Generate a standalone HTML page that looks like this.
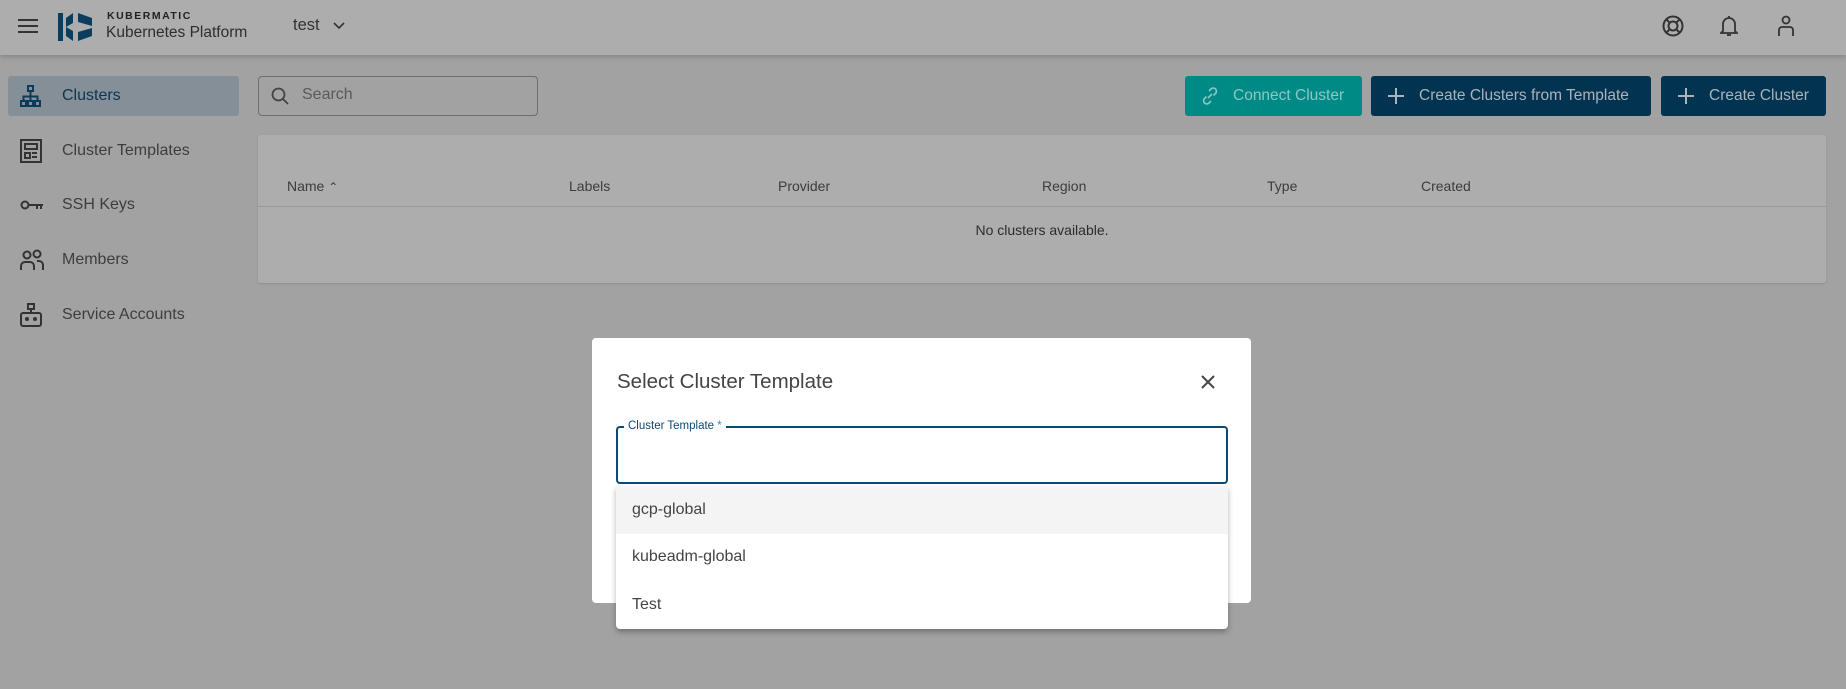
<!DOCTYPE html>
<html><head><meta charset="utf-8"><style>
*{box-sizing:border-box;margin:0;padding:0}
body{width:1846px;height:689px;overflow:hidden;background:#a2a2a2;font-family:"Liberation Sans",sans-serif;color:#3a3a3a;position:relative}
.hdr{position:absolute;left:0;top:0;width:1846px;height:55px;background:#adadad;box-shadow:0 2px 5px rgba(0,0,0,.18)}
.abs{position:absolute}
.nav{position:absolute;left:8px;width:231px;height:40px;display:flex;align-items:center;font-size:16px;color:#3d3d3d}
.nav svg{position:absolute;left:12px}
.nav span{position:absolute;left:54px}
.btn{position:absolute;top:76px;height:40px;border-radius:3px;color:#a9b3b9;font-size:15.5px;display:flex;align-items:center}
.th{position:absolute;top:178px;font-size:14px;color:#3c3c3c}
.opt{position:absolute;left:616px;width:612px;height:48px;font-size:16px;color:#444;padding-left:16px;display:flex;align-items:center}
</style></head><body>
<div class="hdr"></div>
<svg class="abs" style="left:18px;top:18px" width="20" height="16" viewBox="0 0 20 16"><path d="M0 2h20M0 8h20M0 14h20" stroke="#333" stroke-width="2"/></svg>
<svg class="abs" style="left:58px;top:12px" width="35" height="30" viewBox="0 0 35 30"><path d="M0 1h5v28H0z M8 6l7-5v10l-7 4z M8 15l7 4v10l-7-5z M20 1l14 5v8l-14-4z M20 20l14-4v8l-14 5z" fill="#0b3e5e"/></svg>
<div class="abs" style="left:107px;top:10px;font-size:10.5px;font-weight:bold;letter-spacing:1.5px;color:#222">KUBERMATIC</div>
<div class="abs" style="left:106px;top:24px;font-size:15.5px;color:#2e2e2e">Kubernetes Platform</div>
<div class="abs" style="left:293px;top:16px;font-size:16.5px;color:#333">test</div>
<svg class="abs" style="left:333px;top:22px" width="12" height="8" viewBox="0 0 12 8"><path d="M1 1l5 5 5-5" stroke="#333" stroke-width="1.6" fill="none"/></svg>
<svg class="abs" style="left:1662px;top:15px" width="22" height="22" viewBox="0 0 22 22" fill="none" stroke="#333" stroke-width="2"><circle cx="11" cy="11" r="9.5"/><circle cx="11" cy="11" r="4.5"/><path d="M4.5 4.5l3.3 3.3M17.5 4.5l-3.3 3.3M4.5 17.5l3.3-3.3M17.5 17.5l-3.3-3.3"/></svg>
<svg class="abs" style="left:1720px;top:15px" width="18" height="22" viewBox="0 0 18 22" fill="none" stroke="#333" stroke-width="1.8"><path d="M3 16V9a6 6 0 0 1 12 0v7l2 2H1z"/><path d="M7 20h4"/><path d="M9 1v2"/></svg>
<svg class="abs" style="left:1777px;top:15px" width="18" height="22" viewBox="0 0 18 22" fill="none" stroke="#333" stroke-width="1.8"><circle cx="9" cy="5" r="3.5"/><path d="M2 21v-6a3 3 0 0 1 3-3h8a3 3 0 0 1 3 3v6"/></svg>

<div class="nav" style="top:76px;background:#858f97;border-radius:3px;color:#0c3650"><svg width="22" height="22" viewBox="0 0 22 22" fill="none" stroke="#0c3b5a" stroke-width="2"><rect x="8" y="1" width="5" height="5"/><rect x="1" y="16" width="5" height="5"/><rect x="8" y="16" width="5" height="5"/><rect x="15" y="16" width="5" height="5"/><path d="M10.5 6v10M3.5 16v-4.5h14V16"/></svg><span>Clusters</span></div>
<div class="nav" style="top:131px"><svg width="22" height="24" viewBox="0 0 22 24" fill="none" stroke="#333" stroke-width="2"><rect x="1" y="1" width="20" height="22"/><rect x="5" y="5" width="12" height="5"/><rect x="5" y="14" width="5" height="5"/><path d="M12 14h5M12 18h5"/></svg><span>Cluster Templates</span></div>
<div class="nav" style="top:185px"><svg width="24" height="12" viewBox="0 0 24 12" fill="none" stroke="#333" stroke-width="2"><circle cx="5" cy="6" r="3.5"/><path d="M9 6h14M17 6v4M21 6v4"/></svg><span>SSH Keys</span></div>
<div class="nav" style="top:240px"><svg width="24" height="22" viewBox="0 0 24 22" fill="none" stroke="#333" stroke-width="2"><circle cx="7" cy="6" r="3.5"/><circle cx="17" cy="5" r="3.5"/><path d="M1 21v-4a4 4 0 0 1 4-4h5a4 4 0 0 1 4 4v4M17 12h2a4 4 0 0 1 4 4v5"/></svg><span>Members</span></div>
<div class="nav" style="top:295px"><svg width="22" height="24" viewBox="0 0 22 24" fill="none" stroke="#333" stroke-width="2"><rect x="8" y="1" width="6" height="5"/><path d="M11 6v4"/><rect x="1" y="10" width="20" height="13" rx="2"/><circle cx="7" cy="16" r="1" fill="#333"/><circle cx="15" cy="16" r="1" fill="#333"/></svg><span>Service Accounts</span></div>

<div class="abs" style="left:258px;top:76px;width:280px;height:40px;border:1px solid #6e6e6e;border-radius:4px"></div>
<svg class="abs" style="left:271px;top:87px" width="18" height="18" viewBox="0 0 18 18" fill="none" stroke="#444" stroke-width="1.8"><circle cx="7.5" cy="7.5" r="6"/><path d="M12 12l5 5"/></svg>
<div class="abs" style="left:302px;top:86px;font-size:16px;color:#5a5a5a">Search</div>

<div class="btn" style="left:1185px;width:177px;background:#008a86;color:#8cc7c4"><svg style="margin-left:16px" width="18" height="18" viewBox="0 0 18 18" fill="none" stroke="#8cc7c4" stroke-width="1.6"><path d="M7 11l4-4M8 4l2-2a3 3 0 0 1 4.5 4.5l-2 2M10 14l-2 2a3 3 0 0 1-4.5-4.5l2-2"/></svg><span style="margin-left:14px">Connect Cluster</span></div>
<div class="btn" style="left:1371px;width:280px;background:#023451"><svg style="margin-left:16px" width="18" height="18" viewBox="0 0 18 18"><path d="M9 1v16M1 9h16" stroke="#a9b3b9" stroke-width="2"/></svg><span style="margin-left:14px">Create Clusters from Template</span></div>
<div class="btn" style="left:1661px;width:165px;background:#023451"><svg style="margin-left:16px" width="18" height="18" viewBox="0 0 18 18"><path d="M9 1v16M1 9h16" stroke="#a9b3b9" stroke-width="2"/></svg><span style="margin-left:14px">Create Cluster</span></div>

<div class="abs" style="left:258px;top:135px;width:1568px;height:148px;background:#adadad;border-radius:3px;box-shadow:0 1px 2px rgba(0,0,0,.12)"></div>
<div class="abs" style="left:258px;top:206px;width:1568px;height:1px;background:#999"></div>
<div class="th" style="left:287px">Name <span style="font-size:12px">&#8963;</span></div>
<div class="th" style="left:569px">Labels</div>
<div class="th" style="left:778px">Provider</div>
<div class="th" style="left:1042px">Region</div>
<div class="th" style="left:1267px">Type</div>
<div class="th" style="left:1421px">Created</div>
<div class="abs" style="left:258px;width:1568px;top:222px;text-align:center;font-size:14px;color:#2c2c2c">No clusters available.</div>

<div class="abs" style="left:592px;top:338px;width:659px;height:265px;background:#fff;border-radius:4px"></div>
<div class="abs" style="left:617px;top:370px;font-size:20.5px;color:#444">Select Cluster Template</div>
<svg class="abs" style="left:1200px;top:374px" width="16" height="16" viewBox="0 0 16 16"><path d="M2 2l12 12M14 2L2 14" stroke="#444" stroke-width="2"/></svg>
<div class="abs" style="left:616px;top:426px;width:612px;height:58px;border:2px solid #0b4a74;border-radius:4px"></div>
<div class="abs" style="left:624px;top:420px;padding:0 4px;background:#fff;font-size:11.5px;color:#0b4a74">Cluster Template <span style="color:#2a8fd0">*</span></div>
<div class="abs" style="left:616px;top:486px;width:612px;height:143px;background:#fff;border-radius:0 0 4px 4px;box-shadow:0 3px 6px rgba(0,0,0,.3)"></div>
<div class="opt" style="top:486px;background:#f4f4f4">gcp-global</div>
<div class="opt" style="top:533px">kubeadm-global</div>
<div class="opt" style="top:581px">Test</div>
</body></html>
